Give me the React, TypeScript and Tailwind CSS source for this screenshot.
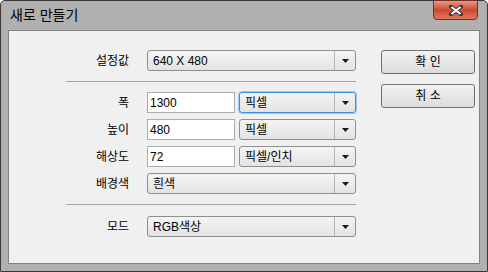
import React from 'react';

const font = { fontFamily: '"Liberation Sans", "Noto Sans CJK KR", sans-serif' };

const Arrow: React.FC = () => (
  <svg width="7" height="4" viewBox="0 0 7 4">
    <path d="M0 0 H7 L3.5 4 Z" fill="#1a1a1a" />
  </svg>
);

const Select: React.FC<{ value?: string; className?: string; focused?: boolean }> = ({ value = '', className = '', focused }) => (
  <div
    className={`flex h-[21px] items-stretch rounded-[3px] border bg-gradient-to-b from-[#f4f4f4] to-[#e3e3e3] ${
      focused ? 'border-[#3c8fe0] shadow-[0_0_0_1px_#9cc8f2]' : 'border-[#8e8f8f]'
    } ${className}`}
  >
    <div className="flex flex-1 items-center pl-[5px] text-[12px] text-black">{value}</div>
    <div className="flex w-[21px] items-center justify-center border-l border-[#b5b5b5]">
      <Arrow />
    </div>
  </div>
);

const Input: React.FC<{ value: string }> = ({ value }) => (
  <div className="flex h-[21px] w-[88px] items-center border border-[#abadb3] bg-white pl-[2px] text-[12px] text-black">
    {value}
  </div>
);

const Row: React.FC<{ label: string; children: React.ReactNode }> = ({ label, children }) => (
  <div className="flex h-[21px] items-center">
    <div className="w-[64px] pr-[1px] text-right text-[12px] text-black">{label}</div>
    <div className="ml-[17px] flex flex-1 gap-[4px]">{children}</div>
  </div>
);

const Sep: React.FC = () => <div className="border-t border-[#a7a7a7]" />;

const Button: React.FC<{ label: string }> = ({ label }) => (
  <div className="flex h-[24px] w-[94px] items-center justify-center rounded-[3px] border border-[#707070] bg-gradient-to-b from-[#f2f2f2] to-[#dcdcdc] text-[12px] text-black">
    {label}
  </div>
);

const App: React.FC = () => {
  return (
    <div style={font} className="flex h-[272px] w-[488px] flex-col rounded-t-[5px] border border-[#3a3a3a] bg-[#b0b0b0]">
      {/* title bar */}
      <div className="relative h-[29px] shrink-0">
        <div className="pl-[9px] pt-[5px] text-[14px] leading-[18px] text-black">새로 만들기</div>
        <div className="absolute right-[9px] top-[-1px] flex h-[20px] w-[45px] items-center justify-center rounded-b-[4px] border border-[#6b3225] bg-gradient-to-b from-[#e99a83] via-[#c9472d] to-[#dc7a5c]">
          <svg width="14" height="11" viewBox="0 0 14 11">
            <path d="M2 1.5 L12 9.5 M12 1.5 L2 9.5" stroke="#3b3b4a" strokeWidth="4" strokeLinecap="square" />
            <path d="M2.5 2 L11.5 9 M11.5 2 L2.5 9" stroke="#ffffff" strokeWidth="2" />
          </svg>
        </div>
      </div>

      {/* content panel */}
      <div className="mx-[7px] flex h-[234px] shrink-0 border border-[#838383] bg-[#f0f0f0]">
        <div className="ml-[57px] mt-[19px] flex w-[290px] flex-col">
          <Row label="설정값">
            <Select value="640 X 480" className="flex-1" />
          </Row>
          <div className="mb-[10px] mt-[10px]">
            <Sep />
          </div>
          <div className="flex flex-col gap-[6px]">
            <Row label="폭">
              <Input value="1300" />
              <Select value="픽셀" className="flex-1" focused />
            </Row>
            <Row label="높이">
              <Input value="480" />
              <Select value="픽셀" className="flex-1" />
            </Row>
            <Row label="해상도">
              <Input value="72" />
              <Select value="픽셀/인치" className="flex-1" />
            </Row>
            <Row label="배경색">
              <Select value="흰색" className="flex-1" />
            </Row>
          </div>
          <div className="mb-[11px] mt-[10px]">
            <Sep />
          </div>
          <Row label="모드">
            <Select value="RGB색상" className="flex-1" />
          </Row>
        </div>
        <div className="ml-[25px] mt-[19px] flex flex-col gap-[10px]">
          <Button label="확 인" />
          <Button label="취 소" />
        </div>
      </div>
    </div>
  );
};

export default App;
